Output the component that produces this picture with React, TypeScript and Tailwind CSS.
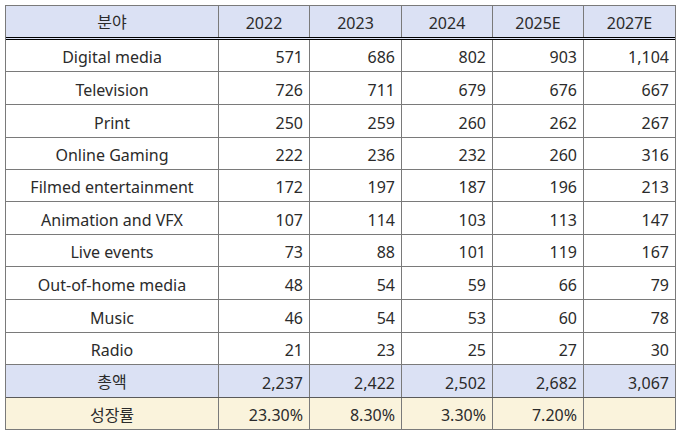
const rows = [
  { name: "Digital media", v: ["571", "686", "802", "903", "1,104"], h: "h-[31px]" },
  { name: "Television", v: ["726", "711", "679", "676", "667"], h: "h-[32px]" },
  { name: "Print", v: ["250", "259", "260", "262", "267"], h: "h-[32px]" },
  { name: "Online Gaming", v: ["222", "236", "232", "260", "316"], h: "h-[31px]" },
  { name: "Filmed entertainment", v: ["172", "197", "187", "196", "213"], h: "h-[31px]" },
  { name: "Animation and VFX", v: ["107", "114", "103", "113", "147"], h: "h-[32px]" },
  { name: "Live events", v: ["73", "88", "101", "119", "167"], h: "h-[31px]" },
  { name: "Out-of-home media", v: ["48", "54", "59", "66", "79"], h: "h-[32px]" },
  { name: "Music", v: ["46", "54", "53", "60", "78"], h: "h-[32px]" },
  { name: "Radio", v: ["21", "23", "25", "27", "30"], h: "h-[31px]" },
];

const years = ["2022", "2023", "2024", "2025E", "2027E"];
const cols = "grid grid-cols-[213px_91px_92px_91px_91px_91px]";
const line = "border-r border-[#7a7a7a]";

export default function App() {
  return (
    <div className="w-[681px] h-[432px] bg-white pt-[5px] pl-[5px] text-[16px] text-[#2b2b2b] [font-family:'Noto_Sans','Noto_Sans_CJK_KR',sans-serif]">
      <div className="w-[671px] border border-[#7a7a7a]">
        {/* header */}
        <div className={`${cols} h-[34px] bg-[#dbe1f4] border-b-[3px] border-double border-black`}>
          <div className={`flex items-center justify-center pt-[1px] ${line}`}>분야</div>
          {years.map((y, i) => (
            <div key={y} className={`flex items-center justify-center pt-[2px] ${i < 4 ? line : ""}`}>{y}</div>
          ))}
        </div>
        {rows.map((r) => (
          <div key={r.name} className={`${cols} ${r.h} border-b border-[#7a7a7a] box-content`}>
            <div className={`flex items-center justify-center pt-[3px] ${line}`}>{r.name}</div>
            {r.v.map((v, i) => (
              <div key={i} className={`flex items-center justify-end pt-[3px] pr-[6px] ${i < 4 ? line : ""}`}>{v}</div>
            ))}
          </div>
        ))}
        <div className={`${cols} h-[32px] box-content bg-[#dbe1f4] border-b border-[#595959]`}>
          <div className={`flex items-center justify-center pt-[2px] ${line}`}>총액</div>
          {["2,237", "2,422", "2,502", "2,682", "3,067"].map((v, i) => (
            <div key={i} className={`flex items-center justify-end pt-[3px] pr-[6px] ${i < 4 ? line : ""}`}>{v}</div>
          ))}
        </div>
        <div className={`${cols} h-[31px] bg-[#faf3dc]`}>
          <div className={`flex items-center justify-center pt-[2px] ${line}`}>성장률</div>
          {["23.30%", "8.30%", "3.30%", "7.20%", ""].map((v, i) => (
            <div key={i} className={`flex items-center justify-end pt-[3px] pr-[6px] ${i < 4 ? line : ""}`}>{v}</div>
          ))}
        </div>
      </div>
    </div>
  );
}
